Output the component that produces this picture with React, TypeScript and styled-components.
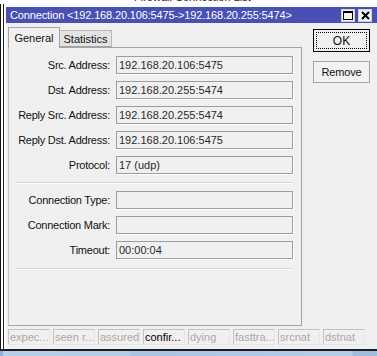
import * as React from 'react'
import styled, { createGlobalStyle } from 'styled-components'

const GlobalStyle = createGlobalStyle`
  html, body {
    margin: 0;
    padding: 0;
    background: #ffffff;
  }
  body {
    font-family: "Liberation Sans", Arial, sans-serif;
    font-size: 11px;
    color: #1a1a1a;
  }
`

const Screen = styled.div`
  width: 377px;
  height: 356px;
  overflow: hidden;
  display: flex;
  flex-direction: column;
  background: #ffffff;
`

const BehindStrip = styled.div`
  height: 4px;
  overflow: hidden;
  padding-left: 134px;
`

const BehindText = styled.div`
  margin-top: -9px;
  font-size: 11px;
  color: #222;
  white-space: nowrap;
`

const Window = styled.div`
  height: 347px;
  box-sizing: border-box;
  padding: 3px 0 0 6px;
  background: #fafafa;
  border-bottom: 2px solid #1c1c1c;
  box-shadow: inset 1px 0 0 #111, inset 3px 0 0 #fff, inset 4px 0 0 #222;
  display: flex;
  flex-direction: column;
`

const TitleBar = styled.div`
  height: 16px;
  flex-shrink: 0;
  background: #4850b3;
  color: #ffffff;
  display: flex;
  align-items: center;
  justify-content: space-between;
  padding-left: 4px;
  padding-right: 5px;
`

const TitleText = styled.span`
  font-size: 11px;
  letter-spacing: -0.15px;
  white-space: nowrap;
`

const TitleButtons = styled.div`
  display: flex;
  gap: 3px;
`

const TitleButton = styled.div`
  width: 14px;
  height: 13px;
  box-sizing: border-box;
  background: #f2f2f2;
  border: 1px solid #d0d0d0;
  display: flex;
  align-items: center;
  justify-content: center;
`

const Body = styled.div`
  flex: 1;
  background: #f0f0f0;
  padding: 4px 0 0 2px;
  display: flex;
  flex-direction: column;
`

const MainRow = styled.div`
  display: flex;
`

const LeftColumn = styled.div`
  width: 294px;
  display: flex;
  flex-direction: column;
`

const TabStrip = styled.div`
  height: 20px;
  display: flex;
  align-items: flex-end;
`

const Tab = styled.div<{ $active?: boolean }>`
  width: 52px;
  box-sizing: border-box;
  height: ${p => (p.$active ? '21px' : '17px')};
  margin-bottom: ${p => (p.$active ? '-1px' : '0')};
  position: relative;
  z-index: ${p => (p.$active ? 1 : 0)};
  background: ${p => (p.$active ? '#f0f0f0' : '#e3e3e3')};
  border: 1px solid ${p => (p.$active ? '#a3a3a3' : '#b9b9b9')};
  border-bottom: ${p => (p.$active ? 'none' : '1px solid #a3a3a3')};
  border-left: ${p => (p.$active ? '1px solid #a3a3a3' : 'none')};
  display: flex;
  justify-content: center;
  align-items: ${p => (p.$active ? 'flex-start' : 'center')};
  padding-top: ${p => (p.$active ? '4px' : '0')};
  font-size: 11px;
  color: #111;
`

const Panel = styled.div`
  height: 279px;
  box-sizing: border-box;
  border: 1px solid #a3a3a3;
  border-left-color: #c4c4c4;
  padding-top: 8px;
`

const FieldGrid = styled.div`
  display: grid;
  grid-template-columns: 101px 177px;
  grid-auto-rows: 18px;
  column-gap: 6px;
  row-gap: 7px;
`

const Label = styled.div`
  text-align: right;
  line-height: 18px;
  letter-spacing: -0.25px;
  white-space: nowrap;
  color: #111;
`

const ValueBox = styled.div`
  box-sizing: border-box;
  height: 18px;
  border: 1px solid #9d9d9d;
  box-shadow: 1px 1px 0 #ffffff;
  padding-left: 2px;
  line-height: 16px;
  color: #2a2a2a;
  white-space: nowrap;
  overflow: hidden;
`

const Separator = styled.div<{ $before: number }>`
  height: 1px;
  width: 277px;
  margin: ${p => p.$before}px 0 8px 7px;
  background: #d6d6d6;
  box-shadow: 0 1px 0 #ffffff;
`

const RightColumn = styled.div`
  margin-left: 11px;
  padding-top: 2px;
  width: 57px;
  display: flex;
  flex-direction: column;
  gap: 9px;
`

const Button = styled.div<{ $default?: boolean }>`
  box-sizing: border-box;
  height: ${p => (p.$default ? '23px' : '22px')};
  border: 1px solid ${p => (p.$default ? '#000' : '#a5a5a5')};
  background: ${p => (p.$default ? '#f0f0f0' : '#f2f2f2')};
  outline: ${p => (p.$default ? '1px dotted #000' : 'none')};
  outline-offset: -4px;
  display: flex;
  align-items: center;
  justify-content: center;
  font-size: ${p => (p.$default ? '12px' : '11px')};
  letter-spacing: ${p => (p.$default ? '0' : '-0.2px')};
  color: #111;
`

const StatusBar = styled.div`
  margin-top: 3px;
  display: flex;
  gap: 3px;
`

const StatusCell = styled.div<{ $on?: boolean }>`
  width: 42px;
  height: 16px;
  box-sizing: border-box;
  border: 1px solid #e6e6e6;
  border-top-color: #c2c2c2;
  border-left-color: #c2c2c2;
  padding-left: 1px;
  line-height: 14px;
  font-size: 11px;
  color: ${p => (p.$on ? '#000' : '#a8a8a8')};
  white-space: nowrap;
  overflow: hidden;
`

const Taskbar = styled.div`
  flex: 1;
  background: linear-gradient(90deg, #8fb0d8 0, #8fb0d8 3px, #b8cfe9 3px, #b3cbe7 130px, #a9c3e3 131px, #b6cde8 352px, #9fbbde 353px);
`

const topFields = [
  ['Src. Address:', '192.168.20.106:5475'],
  ['Dst. Address:', '192.168.20.255:5474'],
  ['Reply Src. Address:', '192.168.20.255:5474'],
  ['Reply Dst. Address:', '192.168.20.106:5475'],
  ['Protocol:', '17 (udp)'],
]

const lowerFields = [
  ['Connection Type:', ''],
  ['Connection Mark:', ''],
  ['Timeout:', '00:00:04'],
]

const flags: [string, boolean][] = [
  ['expec...', false],
  ['seen r...', false],
  ['assured', false],
  ['confir...', true],
  ['dying', false],
  ['fasttra...', false],
  ['srcnat', false],
  ['dstnat', false],
]

const Fields = ({ rows }: { rows: string[][] }) => (
  <FieldGrid>
    {rows.map(([label, value]) => (
      <React.Fragment key={label}>
        <Label>{label}</Label>
        <ValueBox>{value}</ValueBox>
      </React.Fragment>
    ))}
  </FieldGrid>
)

export default function App() {
  return (
    <Screen>
      <GlobalStyle />
      <BehindStrip>
        <BehindText>Firewall Connection List</BehindText>
      </BehindStrip>
      <Window>
        <TitleBar>
          <TitleText>Connection &lt;192.168.20.106:5475-&gt;192.168.20.255:5474&gt;</TitleText>
          <TitleButtons>
            <TitleButton>
              <svg width="10" height="9" viewBox="0 0 10 9">
                <rect x="0.5" y="0.5" width="9" height="8" fill="none" stroke="#000" strokeWidth="1" />
                <rect x="0" y="0" width="10" height="2" fill="#000" />
              </svg>
            </TitleButton>
            <TitleButton>
              <svg width="9" height="9" viewBox="0 0 9 9">
                <path d="M1 1 L8 8 M8 1 L1 8" stroke="#000" strokeWidth="2" />
              </svg>
            </TitleButton>
          </TitleButtons>
        </TitleBar>
        <Body>
          <MainRow>
            <LeftColumn>
              <TabStrip>
                <Tab $active>General</Tab>
                <Tab>Statistics</Tab>
              </TabStrip>
              <Panel>
                <Fields rows={topFields} />
                <Separator $before={8} />
                <Fields rows={lowerFields} />
                <Separator $before={9} />
              </Panel>
            </LeftColumn>
            <RightColumn>
              <Button $default>OK</Button>
              <Button>Remove</Button>
            </RightColumn>
          </MainRow>
          <StatusBar>
            {flags.map(([name, on]) => (
              <StatusCell key={name} $on={on}>{name}</StatusCell>
            ))}
          </StatusBar>
        </Body>
      </Window>
      <Taskbar />
    </Screen>
  )
}
